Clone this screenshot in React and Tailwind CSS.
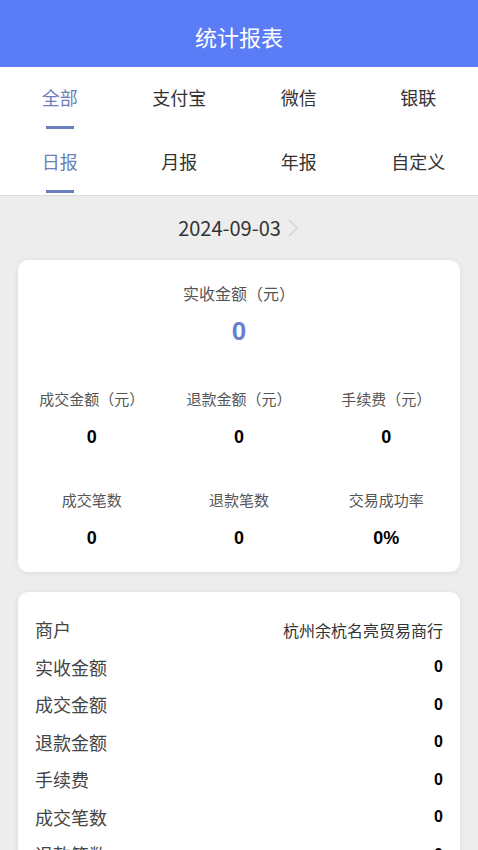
import React, { useState } from 'react';

const font = { fontFamily: '"Noto Sans CJK SC", "Noto Sans", sans-serif' };
const num = { fontFamily: '"Liberation Sans", Arial, sans-serif' };

function TabRow({ items, active, onSelect }) {
  return (
    <div className="grid grid-cols-4 h-[64px]">
      {items.map((t, i) => (
        <button key={t} onClick={() => onSelect(i)} className="flex flex-col items-center justify-start pt-[18px]">
          <span className={`text-[18px] leading-[24px] ${i === active ? 'text-[#6a80b8]' : 'text-[#333]'}`}>{t}</span>
          <span className={`mt-[17px] h-[3px] w-[28px] ${i === active ? 'bg-[#6a80b8]' : 'bg-transparent'}`}></span>
        </button>
      ))}
    </div>
  );
}

export default function App() {
  const [channel, setChannel] = useState(0);
  const [period, setPeriod] = useState(0);

  const stats = [
    { label: '成交金额（元）', value: '0' },
    { label: '退款金额（元）', value: '0' },
    { label: '手续费（元）', value: '0' },
    { label: '成交笔数', value: '0' },
    { label: '退款笔数', value: '0' },
    { label: '交易成功率', value: '0%' },
  ];

  const rows = [
    ['实收金额', '0'],
    ['成交金额', '0'],
    ['退款金额', '0'],
    ['手续费', '0'],
    ['成交笔数', '0'],
    ['退款笔数', '0'],
  ];

  return (
    <div className="min-h-screen bg-[#ededed]" style={font}>
      <div className="h-[67px] bg-[#5a7cf6] flex items-center justify-center">
        <h1 className="text-white text-[22px] leading-none pt-[4px]">统计报表</h1>
      </div>

      <div className="bg-white border-b border-[#dcdcdc]">
        <TabRow items={['全部', '支付宝', '微信', '银联']} active={channel} onSelect={setChannel} />
        <TabRow items={['日报', '月报', '年报', '自定义']} active={period} onSelect={setPeriod} />
      </div>

      <div className="flex items-center justify-center h-[64px]">
        <span className="text-[20px] text-[#333]">2024-09-03</span>
        <svg width="14" height="20" viewBox="0 0 14 20" className="ml-[5px]">
          <path d="M3 2 L11 10 L3 18" fill="none" stroke="#d6d6d6" strokeWidth="1.6" />
        </svg>
      </div>

      <div className="mx-[18px] bg-white rounded-[10px] shadow-[0_1px_6px_rgba(0,0,0,0.08)] pt-[20px] pb-[21px]">
        <div className="text-center text-[16px] leading-[26px] text-[#555]">实收金额（元）</div>
        <div className="text-center text-[26px] leading-[36px] font-bold text-[#6a7fd0] mt-[7px]" style={num}>0</div>
        <div className="grid grid-cols-3 mt-[38px] gap-y-[38px]">
          {stats.map((s) => (
            <div key={s.label} className="flex flex-col items-center">
              <span className="text-[15px] leading-[24px] text-[#555]">{s.label}</span>
              <span className="mt-[13px] text-[18px] leading-[26px] font-bold text-black" style={num}>{s.value}</span>
            </div>
          ))}
        </div>
      </div>

      <div className="mx-[18px] mt-[20px] bg-white rounded-[10px] shadow-[0_1px_6px_rgba(0,0,0,0.08)] px-[17px] pt-[19px] pb-[16px]">
        <div className="flex items-center justify-between h-[37.5px]">
          <span className="text-[18px] text-[#444]">商户</span>
          <span className="text-[16px] text-[#333]">杭州余杭名亮贸易商行</span>
        </div>
        {rows.map(([k, v]) => (
          <div key={k} className="flex items-center justify-between h-[37.5px]">
            <span className="text-[18px] text-[#444]">{k}</span>
            <span className="text-[16px] font-bold text-black" style={num}>{v}</span>
          </div>
        ))}
      </div>
    </div>
  );
}
